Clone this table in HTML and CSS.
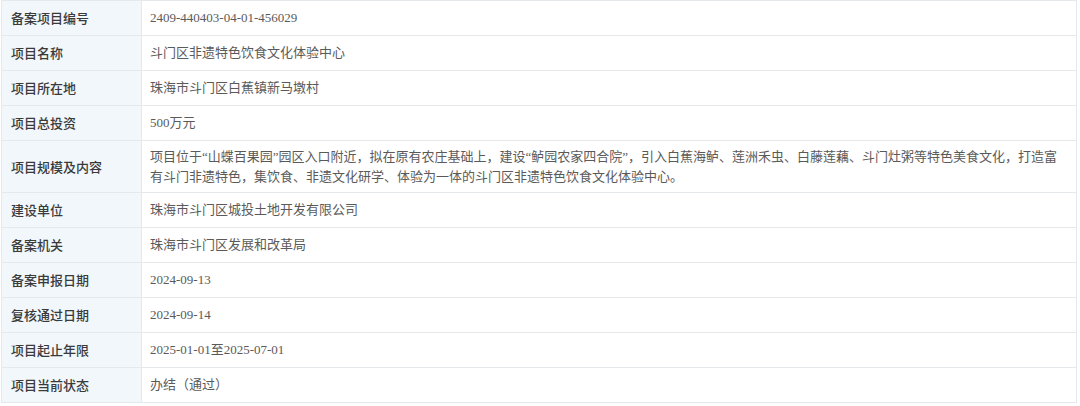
FILE: index.html
```html
<!DOCTYPE html>
<html lang="zh-CN">
<head>
<meta charset="utf-8">
<link rel="stylesheet" href="styles.css">
</head>
<body>
<table class="info">
  <tbody>
    <tr><th>备案项目编号</th><td>2409-440403-04-01-456029</td></tr>
    <tr><th>项目名称</th><td>斗门区非遗特色饮食文化体验中心</td></tr>
    <tr><th>项目所在地</th><td>珠海市斗门区白蕉镇新马墩村</td></tr>
    <tr><th>项目总投资</th><td>500万元</td></tr>
    <tr class="tall"><th>项目规模及内容</th><td>项目位于“山蝶百果园”园区入口附近，拟在原有农庄基础上，建设“鲈园农家四合院”，引入白蕉海鲈、莲洲禾虫、白藤莲藕、斗门灶粥等特色美食文化，打造富有斗门非遗特色，集饮食、非遗文化研学、体验为一体的斗门区非遗特色饮食文化体验中心。</td></tr>
    <tr><th>建设单位</th><td>珠海市斗门区城投土地开发有限公司</td></tr>
    <tr><th>备案机关</th><td>珠海市斗门区发展和改革局</td></tr>
    <tr><th>备案申报日期</th><td>2024-09-13</td></tr>
    <tr><th>复核通过日期</th><td>2024-09-14</td></tr>
    <tr><th>项目起止年限</th><td>2025-01-01至2025-07-01</td></tr>
    <tr><th>项目当前状态</th><td>办结（通过）</td></tr>
  </tbody>
</table>
</body>
</html>
```
FILE: styles.css
```css
html, body {
  margin: 0;
  padding: 0;
  background: #ffffff;
}
body {
  padding: 0 3px 0 1px;
}
.info {
  width: 1076px;
  border-collapse: collapse;
  table-layout: fixed;
  font-size: 13px;
  line-height: 20px;
}
.info th,
.info td {
  border: 1px solid #e6e9eb;
  height: 35px;
  padding: 0 9px;
  vertical-align: middle;
  text-align: left;
  box-sizing: border-box;
}
.info th {
  width: 140px;
  background: #f1f7fa;
  color: #3a3a3a;
  font-family: "Noto Sans CJK SC", sans-serif;
  font-weight: 500;
}
.info td {
  color: #5a5a5a;
  font-family: "Liberation Serif", "Noto Sans CJK SC", serif;
  font-weight: 400;
  padding-left: 8px;
}
.info tr.tall th,
.info tr.tall td {
  height: 52px;
  padding-top: 4px;
  padding-bottom: 4px;
}
```
